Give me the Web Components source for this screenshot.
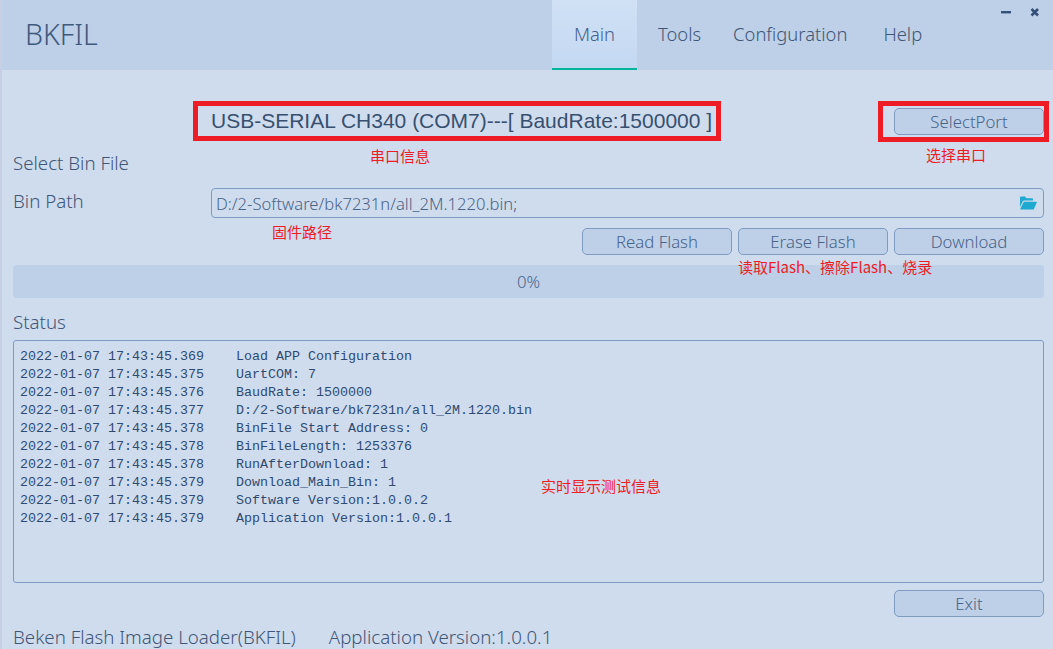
<!DOCTYPE html>
<html lang="en">
<head>
<meta charset="utf-8">
<title>BKFIL</title>
<style>
  html, body { margin: 0; height: 100%; overflow: hidden; background: #cfdcee; }
  body { font-family: "Noto Sans", "Open Sans", sans-serif; font-weight: 300; color: #3f5676; }
</style>
</head>
<body>
<bk-app></bk-app>
<script>
class BkApp extends HTMLElement {
    connectedCallback() {
        this.attachShadow({ mode: 'open' });
        this.shadowRoot.innerHTML = `
            <style>
                :host { display: block; position: relative; width: 1053px; height: 649px; overflow: hidden;
                        background: #cfdcee; border-left: 2px solid #c6d0e4; box-sizing: border-box; }
                main { display: flex; flex-direction: column; padding: 38px 9px 0 11px; }
                .port { display: grid; grid-template-columns: 198px 1fr 150px; height: 27px; align-items: center; }
                .port b { grid-column: 2; font: 21px/24px "Liberation Sans", sans-serif; color: #37506f; white-space: nowrap; margin-top: -1px; }
                .title { font-size: 18.7px; height: 26px; line-height: 26px; margin-top: 15px; }
                .path { display: grid; grid-template-columns: 198px 1fr; height: 30px; margin-top: 12px; }
                .path span { font-size: 18.7px; line-height: 26px; }
                .actions { display: flex; justify-content: flex-end; gap: 6px; margin-top: 10px; }
                bk-progress { margin-top: 10px; }
                .status { font-size: 18.7px; line-height: 26px; height: 26px; margin-top: 11px; margin-bottom: 5px; }
                .exit { display: flex; justify-content: flex-end; margin-top: 7px; }
                footer { display: flex; gap: 33px; font-size: 18.7px; line-height: 26px; margin-top: 7px; white-space: nowrap; }
            </style>
            <bk-header></bk-header>
            <main>
                <div class="port">
                    <b>USB-SERIAL CH340 (COM7)---[ BaudRate:1500000 ]</b>
                    <bk-button>SelectPort</bk-button>
                </div>
                <div class="title">Select Bin File</div>
                <div class="path">
                    <span>Bin Path</span>
                    <bk-path>D:/2-Software/bk7231n/all_2M.1220.bin;</bk-path>
                </div>
                <div class="actions">
                    <bk-button>Read Flash</bk-button>
                    <bk-button>Erase Flash</bk-button>
                    <bk-button>Download</bk-button>
                </div>
                <bk-progress>0%</bk-progress>
                <div class="status">Status</div>
                <bk-log></bk-log>
                <div class="exit"><bk-button>Exit</bk-button></div>
                <footer>
                    <span>Beken Flash Image Loader(BKFIL)</span>
                    <span>Application Version:1.0.0.1</span>
                </footer>
            </main>
            <bk-mark x="191" y="101" w="528" h="40"></bk-mark>
            <bk-mark x="876" y="101" w="171" h="41"></bk-mark>
            <bk-note x="368" y="146">串口信息</bk-note>
            <bk-note x="924" y="145">选择串口</bk-note>
            <bk-note x="270" y="222">固件路径</bk-note>
            <bk-note x="736" y="257">读取Flash、擦除Flash、烧录</bk-note>
            <bk-note x="539" y="476">实时显示测试信息</bk-note>
        `;
    }
}

class BkHeader extends HTMLElement {
    connectedCallback() {
        this.attachShadow({ mode: 'open' });
        this.shadowRoot.innerHTML = `
            <style>
                :host { display: flex; height: 70px; background: #bdd0e8; position: relative; }
                .logo { font-size: 28.5px; line-height: 68px; margin-left: 23px; width: 527px; color: #3f5a7c; }
                nav { display: flex; }
                .win { position: absolute; top: 0; left: 994px; }
            </style>
            <div class="logo">BKFIL</div>
            <nav>
                <bk-tab active style="width:85px">Main</bk-tab>
                <bk-tab style="padding:0 16px 3px 21px">Tools</bk-tab>
                <bk-tab style="padding:0 18px 3px 16px">Configuration</bk-tab>
                <bk-tab style="padding:0 18px 3px">Help</bk-tab>
            </nav>
            <svg class="win" width="50" height="24" viewBox="0 0 50 24">
                <rect x="5" y="11" width="10" height="2.4" fill="#35507a"/>
                <path d="M35.5 9 L42 15.5 M42 9 L35.5 15.5" stroke="#35507a" stroke-width="2.6" fill="none"/>
            </svg>
        `;
    }
}

class BkTab extends HTMLElement {
    connectedCallback() {
        this.attachShadow({ mode: 'open' });
        this.shadowRoot.innerHTML = `
            <style>
                :host { display: flex; align-items: center; justify-content: center; box-sizing: border-box;
                        height: 70px; font-size: 18.4px; color: #3f5676; }
                :host([active]) { background: linear-gradient(#d0e1f5, #c4d8f2); border-bottom: 2px solid #00b59c; padding-bottom: 1px; color: #44608a; }
            </style>
            <slot></slot>
        `;
    }
}

class BkButton extends HTMLElement {
    connectedCallback() {
        this.attachShadow({ mode: 'open' });
        this.shadowRoot.innerHTML = `
            <style>
                :host { display: flex; align-items: center; justify-content: center; box-sizing: border-box;
                        width: 150px; height: 27px; background: #bdd0e8; border: 1px solid #7f9cc0; border-radius: 5px;
                        font-size: 16.8px; color: #4a6488; }
            </style>
            <slot></slot>
        `;
    }
}

class BkPath extends HTMLElement {
    connectedCallback() {
        this.attachShadow({ mode: 'open' });
        this.shadowRoot.innerHTML = `
            <style>
                :host { display: flex; align-items: center; justify-content: space-between; box-sizing: border-box;
                        height: 30px; padding: 0 6px 0 4px; border: 1px solid #7f9cc0; border-radius: 4px;
                        font-size: 16.6px; color: #4a6488; }
                svg { display: block; }
            </style>
            <slot></slot>
            <svg width="17" height="14" viewBox="0 0 17 14">
                <path d="M0 1.5 Q0 .5 1 .5 H5 L6.5 2.2 H12 Q13 2.2 13 3.2 V4.5 H4 Q3 4.5 2.6 5.5 L0 11 Z" fill="#1fa8d0"/>
                <path d="M3.8 5.8 H16.4 Q17 5.8 16.7 6.6 L14 13 Q13.7 13.6 13 13.6 H.8 Q0 13.6 .4 12.8 Z" fill="#1fa8d0"/>
            </svg>
        `;
    }
}

class BkProgress extends HTMLElement {
    connectedCallback() {
        this.attachShadow({ mode: 'open' });
        this.shadowRoot.innerHTML = `
            <style>
                :host { display: flex; align-items: center; justify-content: center; height: 33px; padding-bottom: 1px; box-sizing: border-box;
                        background: #bdd0e8; border-radius: 4px; font-size: 16.8px; color: #4a6488; }
            </style>
            <slot></slot>
        `;
    }
}

class BkLog extends HTMLElement {
    connectedCallback() {
        const lines = [
            ['2022-01-07 17:43:45.369', 'Load APP Configuration'],
            ['2022-01-07 17:43:45.375', 'UartCOM: 7'],
            ['2022-01-07 17:43:45.376', 'BaudRate: 1500000'],
            ['2022-01-07 17:43:45.377', 'D:/2-Software/bk7231n/all_2M.1220.bin'],
            ['2022-01-07 17:43:45.378', 'BinFile Start Address: 0'],
            ['2022-01-07 17:43:45.378', 'BinFileLength: 1253376'],
            ['2022-01-07 17:43:45.378', 'RunAfterDownload: 1'],
            ['2022-01-07 17:43:45.379', 'Download_Main_Bin: 1'],
            ['2022-01-07 17:43:45.379', 'Software Version:1.0.0.2'],
            ['2022-01-07 17:43:45.379', 'Application Version:1.0.0.1'],
        ];
        this.attachShadow({ mode: 'open' });
        this.shadowRoot.innerHTML = `
            <style>
                :host { display: block; box-sizing: border-box; height: 243px; padding: 7px 6px 6px;
                        border: 1px solid #7f9cc0; border-radius: 3px;
                        font: 13.33px/18px "Liberation Mono", monospace; color: #2f4a70; }
                div { display: flex; gap: 32px; white-space: pre; }
            </style>
            ${lines.map(l => `<div><span>${l[0]}</span><span>${l[1]}</span></div>`).join('')}
        `;
    }
}

class BkMark extends HTMLElement {
    connectedCallback() {
        this.attachShadow({ mode: 'open' });
        const a = n => this.getAttribute(n) + 'px';
        this.shadowRoot.innerHTML = `
            <style>
                :host { position: absolute; left: ${a('x')}; top: ${a('y')}; width: ${a('w')}; height: ${a('h')};
                        box-sizing: border-box; border: 5px solid #ee1c25; }
            </style>
        `;
    }
}

class BkNote extends HTMLElement {
    connectedCallback() {
        this.attachShadow({ mode: 'open' });
        const a = n => this.getAttribute(n) + 'px';
        this.shadowRoot.innerHTML = `
            <style>
                :host { position: absolute; left: ${a('x')}; top: ${a('y')}; white-space: nowrap;
                        font: 400 15px/20px "Noto Sans CJK SC", "Liberation Sans", sans-serif; color: #ee1c25; }
            </style>
            <slot></slot>
        `;
    }
}

customElements.define('bk-app', BkApp);
customElements.define('bk-header', BkHeader);
customElements.define('bk-tab', BkTab);
customElements.define('bk-button', BkButton);
customElements.define('bk-path', BkPath);
customElements.define('bk-progress', BkProgress);
customElements.define('bk-log', BkLog);
customElements.define('bk-mark', BkMark);
customElements.define('bk-note', BkNote);
</script>
</body>
</html>
